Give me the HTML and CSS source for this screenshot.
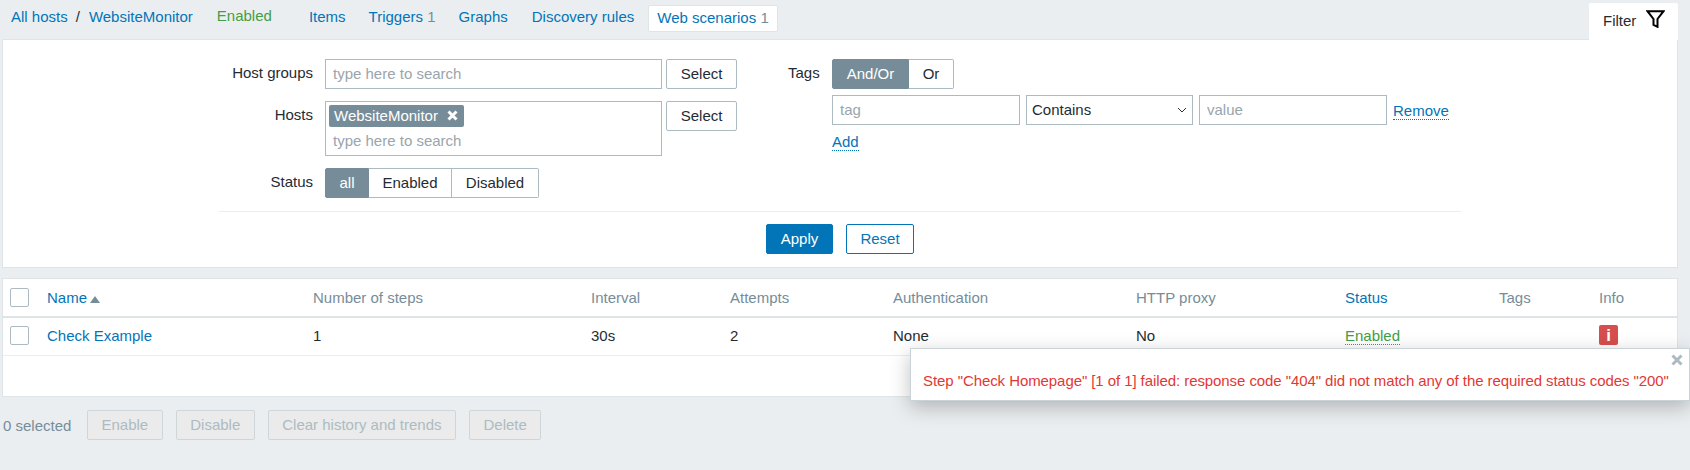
FILE: index.html
```html
<!DOCTYPE html>
<html lang="en">
<head>
  <meta charset="UTF-8" />
  <title>Web scenarios</title>
  <link rel="stylesheet" href="styles.css">
</head>
<body>
  <div class="page">
    <div class="topbar">
      <nav class="host-nav">
        <a class="crumb" href="#">All hosts</a>
        <span class="crumb-sep">/</span>
        <a class="crumb" href="#">WebsiteMonitor</a>
        <span class="host-status">Enabled</span>
        <a class="nav-item nav-items" href="#">Items</a>
        <a class="nav-item nav-triggers" href="#">Triggers <span class="count">1</span></a>
        <a class="nav-item nav-graphs" href="#">Graphs</a>
        <a class="nav-item nav-discovery" href="#">Discovery rules</a>
        <a class="nav-item nav-active" href="#">Web scenarios <span class="count">1</span></a>
      </nav>
      <div class="filter-tab">
        <span>Filter</span>
        <svg class="filter-icon" width="19" height="18" viewBox="0 0 19 18">
          <path d="M1.5 1.2H17.5L11.5 9V16.8L7.5 14.8V9Z" fill="none" stroke="#000" stroke-width="2"/>
        </svg>
      </div>
    </div>

    <section class="panel filter-panel">
      <div class="filter-cols">
        <div class="form-grid col-left">
          <label class="form-label">Host groups</label>
          <div class="control-row">
            <input class="text-input wide" type="text" placeholder="type here to search">
            <button class="btn-select">Select</button>
          </div>
          <label class="form-label">Hosts</label>
          <div class="control-row">
            <div class="multiselect">
              <span class="chip">WebsiteMonitor
                <svg width="11" height="11" viewBox="0 0 11 11"><path d="M1.5 1.5L9.5 9.5M9.5 1.5L1.5 9.5" stroke="#fff" stroke-width="3"/></svg>
              </span>
              <input class="multi-input" type="text" placeholder="type here to search">
            </div>
            <button class="btn-select">Select</button>
          </div>
          <label class="form-label">Status</label>
          <div class="segmented">
            <span class="seg seg-on seg-all">all</span>
            <span class="seg seg-enabled">Enabled</span>
            <span class="seg seg-disabled">Disabled</span>
          </div>
        </div>
        <div class="form-grid col-right">
          <label class="form-label">Tags</label>
          <div class="segmented">
            <span class="seg seg-on seg-andor">And/Or</span>
            <span class="seg seg-or">Or</span>
          </div>
          <div class="tag-row">
            <input class="text-input tag-input" type="text" placeholder="tag">
            <select class="tag-select"><option>Contains</option></select>
            <input class="text-input tag-input" type="text" placeholder="value">
            <a class="dotted-link" href="#">Remove</a>
          </div>
          <div class="add-row"><a class="dotted-link" href="#">Add</a></div>
        </div>
      </div>
      <div class="filter-actions">
        <button class="btn-apply">Apply</button>
        <button class="btn-reset">Reset</button>
      </div>
    </section>

    <section class="panel list-panel">
      <table class="list-table">
        <colgroup>
          <col class="c-check"><col class="c-name"><col class="c-steps"><col class="c-interval"><col class="c-attempts">
          <col class="c-auth"><col class="c-proxy"><col class="c-status"><col class="c-tags"><col class="c-info">
        </colgroup>
        <thead>
          <tr>
            <th><span class="checkbox"></span></th>
            <th><a href="#">Name</a><span class="sort-arrow"></span></th>
            <th>Number of steps</th>
            <th>Interval</th>
            <th>Attempts</th>
            <th>Authentication</th>
            <th>HTTP proxy</th>
            <th><a href="#">Status</a></th>
            <th>Tags</th>
            <th>Info</th>
          </tr>
        </thead>
        <tbody>
          <tr>
            <td><span class="checkbox"></span></td>
            <td><a href="#">Check Example</a></td>
            <td>1</td>
            <td>30s</td>
            <td>2</td>
            <td>None</td>
            <td>No</td>
            <td><a class="status-on" href="#">Enabled</a></td>
            <td></td>
            <td><span class="info-icon">i</span></td>
          </tr>
        </tbody>
      </table>
    </section>

    <div class="action-bar">
      <span class="selected-count">0 selected</span>
      <button class="btn-off" disabled>Enable</button>
      <button class="btn-off" disabled>Disable</button>
      <button class="btn-off" disabled>Clear history and trends</button>
      <button class="btn-off" disabled>Delete</button>
    </div>
  </div>

  <div class="hint-box">
    <svg class="hint-close" width="12" height="12" viewBox="0 0 12 12"><path d="M1.5 1.5L10.5 10.5M10.5 1.5L1.5 10.5" stroke="#acbbc2" stroke-width="3"/></svg>
    <span class="hint-text">Step "Check Homepage" [1 of 1] failed: response code "404" did not match any of the required status codes "200"</span>
  </div>
</body>
</html>
```

FILE: styles.css
```css
* {
  box-sizing: border-box;
}

body {
  margin: 0;
  height: 470px;
  overflow: hidden;
  position: relative;
  background: #ebeef0;
  color: #1f2c33;
  font-family: "Liberation Sans", Arial, sans-serif;
  font-size: 15px;
}

a {
  color: #0275b8;
  text-decoration: none;
}

input,
select,
button {
  font: inherit;
  margin: 0;
}

input::placeholder {
  color: #9aa5ab;
  opacity: 1;
}

.page {
  padding: 0 12px 0 2px;
}

/* top navigation */
.topbar {
  height: 39px;
  display: flex;
  justify-content: space-between;
  align-items: flex-end;
}

.host-nav {
  display: flex;
  align-items: center;
  height: 33px;
  padding-left: 9px;
  align-self: flex-start;
}

.crumb-sep {
  margin: 0 9px 0 8px;
  color: #1f2c33;
}

.host-status {
  color: #429e47;
  margin-left: 24px;
  position: relative;
  top: -1px;
}

.nav-items { margin-left: 37px; }
.nav-triggers { margin-left: 23px; }
.nav-graphs { margin-left: 23px; }
.nav-discovery { margin-left: 24px; }

.count {
  color: #768d99;
}

.nav-active {
  margin-left: 14px;
  height: 27px;
  margin-top: 4px;
  padding: 0 8px;
  line-height: 24px;
  background: #fff;
  border: 1px solid #dfe4e7;
  border-radius: 2px;
}

.filter-tab {
  width: 89px;
  height: 37px;
  padding: 0 13px 0 14px;
  display: flex;
  justify-content: space-between;
  align-items: flex-start;
  line-height: 35px;
  background: #fff;
  border-radius: 2px 2px 0 0;
  position: relative;
  top: 1px;
  z-index: 1;
}

.filter-icon {
  margin-top: 7px;
}

.panel {
  background: #fff;
  border: 1px solid #dfe4e7;
}

/* filter form */
.filter-panel {
  height: 229px;
  padding: 19px 216px 0 216px;
}

.filter-cols {
  display: flex;
  height: 152px;
}

.form-grid {
  display: grid;
  column-gap: 12px;
  align-content: start;
}

.col-left {
  grid-template-columns: 94px 412px;
  row-gap: 12px;
  width: 569px;
}

.col-right {
  grid-template-columns: 31px auto;
  column-gap: 13px;
  row-gap: 6px;
}

.form-label {
  height: 30px;
  line-height: 28px;
  text-align: right;
}

.control-row {
  display: flex;
  gap: 4px;
  align-items: flex-start;
}

.text-input {
  height: 30px;
  padding: 0 7px 1px;
  border: 1px solid #acbbc2;
  border-radius: 0;
  background: #fff;
  outline: none;
}

.wide {
  width: 338px;
}

.btn-select {
  width: 71px;
  height: 30px;
  padding: 0 0 2px;
  color: #1f2c33;
  background: #fff;
  border: 1px solid #acbbc2;
  border-radius: 2px;
}

.multiselect {
  width: 338px;
  height: 55px;
  padding: 3px;
  border: 1px solid #acbbc2;
  display: flex;
  flex-direction: column;
  align-items: flex-start;
}

.chip {
  display: flex;
  align-items: center;
  gap: 9px;
  width: 135px;
  height: 23px;
  padding: 0 5px 1px;
  color: #fff;
  background: #768d99;
  border-radius: 2px;
}

.multi-input {
  width: 100%;
  height: 24px;
  margin-top: 2px;
  padding: 0 4px;
  border: 0;
  outline: none;
}

.segmented {
  display: flex;
  height: 30px;
  width: max-content;
}

.seg {
  line-height: 27px;
  text-align: center;
  background: #fff;
  border: 1px solid #acbbc2;
  border-left-width: 0;
}

.seg:first-child {
  border-left-width: 1px;
  border-radius: 2px 0 0 2px;
}

.seg:last-child {
  border-radius: 0 2px 2px 0;
}

.seg-on {
  color: #fff;
  background: #768d99;
  border-color: #768d99;
}

.seg-all { width: 44px; }
.seg-enabled { width: 83px; }
.seg-disabled { width: 87px; }
.seg-andor { width: 77px; }
.seg-or { width: 45px; }

.tag-row {
  grid-column: 2;
  display: flex;
  gap: 6px;
  align-items: center;
}

.tag-input {
  width: 188px;
}

.tag-select {
  width: 167px;
  height: 30px;
  padding: 0 5px 1px;
  appearance: none;
  color: #1f2c33;
  border: 1px solid #acbbc2;
  border-radius: 0;
  background: #fff url("data:image/svg+xml,%3Csvg xmlns='http://www.w3.org/2000/svg' width='10' height='6'%3E%3Cpath d='M1 1l4 4 4-4' fill='none' stroke='%23333' stroke-width='1'/%3E%3C/svg%3E") no-repeat right 5px center;
}

.dotted-link {
  line-height: 17px;
  border-bottom: 1px dotted #0275b8;
}

.tag-row .dotted-link {
  position: relative;
  top: 1px;
}

.add-row {
  grid-column: 2;
  padding-top: 2px;
  line-height: 17px;
}

.filter-actions {
  display: flex;
  justify-content: center;
  gap: 13px;
  padding-top: 12px;
  border-top: 1px solid #ebeef0;
}

.btn-apply,
.btn-reset {
  height: 30px;
  padding: 0 0 1px;
  border: 1px solid #0275b8;
  border-radius: 2px;
}

.btn-apply {
  width: 67px;
  color: #fff;
  background: #0275b8;
}

.btn-reset {
  width: 68px;
  color: #0275b8;
  background: #fff;
}

/* list */
.list-panel {
  height: 119px;
  margin-top: 10px;
}

.list-table {
  width: 100%;
  table-layout: fixed;
  border-collapse: collapse;
}

.c-check { width: 44px; }
.c-name { width: 266px; }
.c-steps { width: 278px; }
.c-interval { width: 139px; }
.c-attempts { width: 163px; }
.c-auth { width: 243px; }
.c-proxy { width: 209px; }
.c-status { width: 154px; }
.c-tags { width: 100px; }

.list-table th,
.list-table td {
  padding: 0;
  text-align: left;
  font-weight: normal;
}

.list-table th {
  height: 38px;
  padding-bottom: 1px;
  color: #768d99;
  border-bottom: 2px solid #dfe4e7;
}

.list-table td {
  height: 38px;
  padding-bottom: 2px;
  border-bottom: 1px solid #ebeef0;
}

.checkbox {
  display: block;
  width: 19px;
  height: 19px;
  margin-left: 7px;
  background: #fff;
  border: 1px solid #acbbc2;
  border-radius: 2px;
}

.sort-arrow {
  display: inline-block;
  margin-left: 3px;
  border-left: 5px solid transparent;
  border-right: 5px solid transparent;
  border-bottom: 7px solid #768d99;
}

.status-on {
  color: #429e47;
  border-bottom: 1px dotted #429e47;
}

.info-icon {
  display: block;
  width: 19px;
  height: 20px;
  line-height: 21px;
  text-align: center;
  color: #fff;
  background: #d64e4e;
  border-radius: 2px;
  font-size: 17px;
  font-weight: bold;
}

/* bottom bar */
.action-bar {
  display: flex;
  align-items: center;
  gap: 13px;
  margin-top: 13px;
  padding-left: 1px;
}

.selected-count {
  width: 71px;
  color: #768d99;
}

.btn-off {
  height: 30px;
  padding: 0 13.5px 1px;
  color: #acbbc2;
  background: #ebebeb;
  border: 1px solid #cfd6da;
  border-radius: 2px;
}

/* error hint */
.hint-box {
  position: absolute;
  left: 910px;
  top: 348px;
  right: 0;
  height: 53px;
  padding: 23px 0 0 12px;
  line-height: 17px;
  background: #fff;
  border: 1px solid #c9d3d8;
  box-shadow: 0 6px 20px rgba(0, 0, 0, 0.25);
}

.hint-text {
  color: #e33734;
  white-space: nowrap;
  letter-spacing: -0.075px;
}

.hint-close {
  position: absolute;
  right: 6px;
  top: 5px;
}
```
